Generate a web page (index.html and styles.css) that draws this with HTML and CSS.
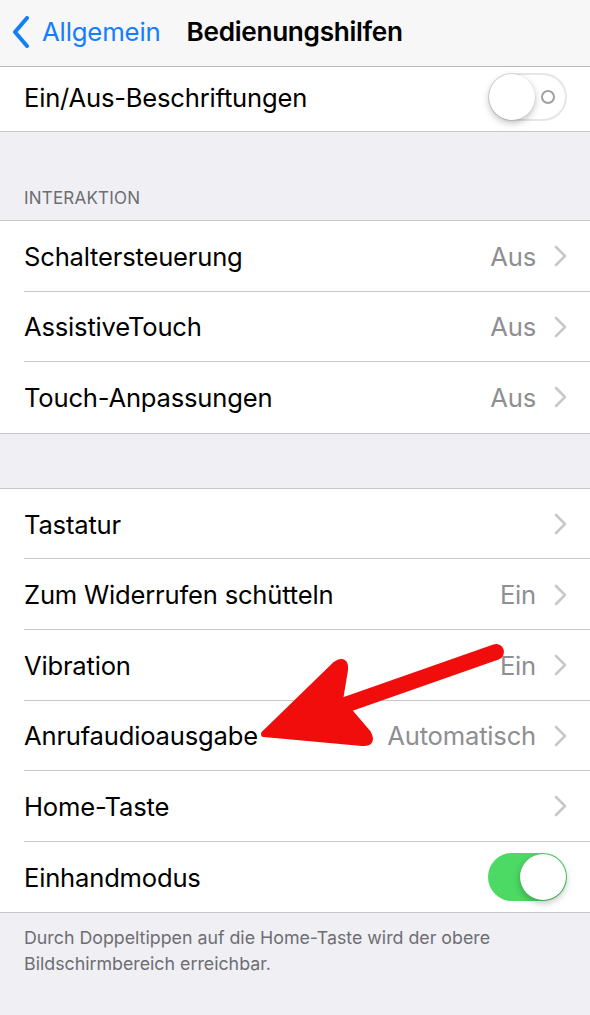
FILE: index.html
```html
<!DOCTYPE html>
<html lang="de">
<head>
<meta charset="utf-8">
<title>Bedienungshilfen</title>
<link rel="stylesheet" href="styles.css">
</head>
<body>
<div class="screen">
  <header class="navbar">
    <a class="back">
      <svg class="back-chevron" width="18" height="32" viewBox="0 0 18 32"><path d="M15 2 L3 16 L15 30" fill="none" stroke="#147efb" stroke-width="4" stroke-linecap="round" stroke-linejoin="round"/></svg>
      <span>Allgemein</span>
    </a>
    <h1 class="title">Bedienungshilfen</h1>
  </header>

  <section class="group group-first">
    <div class="row">
      <span class="label">Ein/Aus-Beschriftungen</span>
      <span class="switch switch-off"><span class="switch-o"></span><span class="knob"></span></span>
    </div>
  </section>

  <div class="section-header">INTERAKTION</div>
  <section class="group">
    <div class="row"><span class="label">Schaltersteuerung</span><span class="value">Aus</span><svg class="chev" width="13" height="22" viewBox="0 0 13 22"><path d="M2 2 L11 11 L2 20" fill="none" stroke="#c7c7cc" stroke-width="2.6" stroke-linecap="round" stroke-linejoin="round"/></svg></div>
    <div class="row"><span class="label">AssistiveTouch</span><span class="value">Aus</span><svg class="chev" width="13" height="22" viewBox="0 0 13 22"><path d="M2 2 L11 11 L2 20" fill="none" stroke="#c7c7cc" stroke-width="2.6" stroke-linecap="round" stroke-linejoin="round"/></svg></div>
    <div class="row"><span class="label">Touch-Anpassungen</span><span class="value">Aus</span><svg class="chev" width="13" height="22" viewBox="0 0 13 22"><path d="M2 2 L11 11 L2 20" fill="none" stroke="#c7c7cc" stroke-width="2.6" stroke-linecap="round" stroke-linejoin="round"/></svg></div>
  </section>

  <div class="spacer"></div>
  <section class="group">
    <div class="row"><span class="label">Tastatur</span><span class="value"></span><svg class="chev" width="13" height="22" viewBox="0 0 13 22"><path d="M2 2 L11 11 L2 20" fill="none" stroke="#c7c7cc" stroke-width="2.6" stroke-linecap="round" stroke-linejoin="round"/></svg></div>
    <div class="row"><span class="label">Zum Widerrufen schütteln</span><span class="value">Ein</span><svg class="chev" width="13" height="22" viewBox="0 0 13 22"><path d="M2 2 L11 11 L2 20" fill="none" stroke="#c7c7cc" stroke-width="2.6" stroke-linecap="round" stroke-linejoin="round"/></svg></div>
    <div class="row"><span class="label">Vibration</span><span class="value">Ein</span><svg class="chev" width="13" height="22" viewBox="0 0 13 22"><path d="M2 2 L11 11 L2 20" fill="none" stroke="#c7c7cc" stroke-width="2.6" stroke-linecap="round" stroke-linejoin="round"/></svg></div>
    <div class="row"><span class="label">Anrufaudioausgabe</span><span class="value">Automatisch</span><svg class="chev" width="13" height="22" viewBox="0 0 13 22"><path d="M2 2 L11 11 L2 20" fill="none" stroke="#c7c7cc" stroke-width="2.6" stroke-linecap="round" stroke-linejoin="round"/></svg></div>
    <div class="row"><span class="label">Home-Taste</span><span class="value"></span><svg class="chev" width="13" height="22" viewBox="0 0 13 22"><path d="M2 2 L11 11 L2 20" fill="none" stroke="#c7c7cc" stroke-width="2.6" stroke-linecap="round" stroke-linejoin="round"/></svg></div>
    <div class="row">
      <span class="label">Einhandmodus</span>
      <span class="switch switch-on"><span class="knob"></span></span>
    </div>
  </section>
  <p class="footer">Durch Doppeltippen auf die Home-Taste wird der obere Bildschirmbereich erreichbar.</p>

  <svg class="arrow" width="590" height="1015" viewBox="0 0 590 1015">
    <line x1="496" y1="652" x2="345" y2="705" stroke="#f20d0d" stroke-width="16" stroke-linecap="round"/>
    <path d="M264 734 L336 664 Q346 658 345 670 L340 700 L350 712 L368 733 Q374 744 362 743 Z" fill="#f20d0d" stroke="#f20d0d" stroke-width="6" stroke-linejoin="round"/>
  </svg>
</div>
</body>
</html>
```
FILE: styles.css
```css
* { box-sizing: border-box; }

html, body {
  margin: 0;
  padding: 0;
  background: #efeff4;
}

body {
  font-family: Inter, "Liberation Sans", sans-serif;
  color: #000;
  -webkit-font-smoothing: antialiased;
}

.screen {
  position: relative;
  width: 590px;
  height: 1015px;
  overflow: hidden;
  background: #efeff4;
}

.navbar {
  height: 67px;
  background: #f7f7f8;
  border-bottom: 1px solid #b8b8bc;
  display: flex;
  align-items: center;
  padding-left: 12px;
  padding-bottom: 3px;
}

.back {
  display: flex;
  align-items: center;
  color: #147efb;
  font-size: 25.8px;
  gap: 12px;
  letter-spacing: -0.2px;
}

.back-chevron { display: block; margin-top: 1px; }

.title {
  margin: 0 0 0 26px;
  font-size: 26.2px;
  font-weight: 600;
  letter-spacing: -0.3px;
}

.group {
  background: #fff;
  border-top: 1px solid #c8c7cc;
  border-bottom: 1px solid #c8c7cc;
}

.group-first { border-top: none; }

.row {
  height: 70.6px;
  display: flex;
  align-items: center;
  padding-left: 24px;
  padding-right: 23px;
  position: relative;
  font-size: 25.6px;
  letter-spacing: -0.2px;
}

.group-first .row { height: 64px; padding-bottom: 4px; }

.row + .row::before {
  content: "";
  position: absolute;
  left: 24px;
  right: 0;
  top: -1px;
  height: 1px;
  background: #c8c7cc;
}

.label { flex: 1; }

.value {
  color: #8e8e93;
  margin-right: 18px;
}

.chev {
  display: block;
  flex: none;
}

.section-header {
  height: 88px;
  padding: 0 24px 12px;
  display: flex;
  align-items: flex-end;
  font-size: 17px;
  color: #6d6d72;
  letter-spacing: 0.2px;
}

.spacer { height: 54px; }

.switch {
  position: relative;
  width: 79px;
  height: 48px;
  border-radius: 24px;
  flex: none;
}

.switch-off {
  background: #fff;
  box-shadow: inset 0 0 0 2px #e5e5ea;
}

.switch-on {
  background: #4cd964;
}

.knob {
  position: absolute;
  top: 1px;
  width: 46px;
  height: 46px;
  border-radius: 50%;
  background: #fff;
  box-shadow: 0 3px 7px rgba(0,0,0,0.25), 0 0 0 0.5px rgba(0,0,0,0.08);
}

.switch-off .knob { left: 1px; }
.switch-on .knob { right: 1px; }

.switch-o {
  position: absolute;
  right: 12px;
  top: 17px;
  width: 14px;
  height: 14px;
  border-radius: 50%;
  border: 2px solid #a0a0a4;
}

.footer {
  margin: 0;
  padding: 12px 24px 0;
  font-size: 17.8px;
  line-height: 26px;
  color: #6d6d72;
}

.arrow {
  position: absolute;
  left: 0;
  top: 0;
  pointer-events: none;
}
```
